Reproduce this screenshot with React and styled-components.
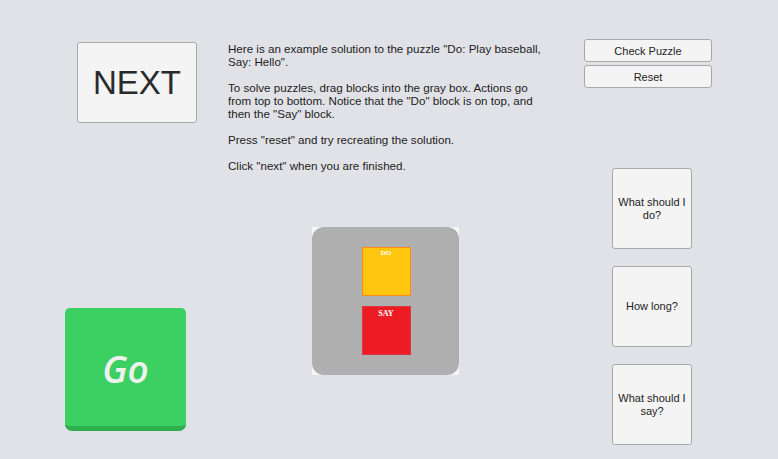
import React from 'react'
import styled, { createGlobalStyle } from 'styled-components'

const GlobalStyle = createGlobalStyle`
  html, body {
    margin: 0;
    padding: 0;
    background: #e1e2e7;
  }
  body {
    font-family: 'Liberation Sans', Arial, sans-serif;
  }
`

const Screen = styled.div`
  width: 778px;
  height: 459px;
  display: flex;
  background: #e1e2e7;
  overflow: hidden;
`

const LeftColumn = styled.div`
  width: 228px;
  display: flex;
  flex-direction: column;
  align-items: flex-start;
  padding: 42px 0 28px 0;
  box-sizing: border-box;
`

const MiddleColumn = styled.div`
  width: 356px;
  display: flex;
  flex-direction: column;
  align-items: flex-start;
  padding-top: 42px;
  box-sizing: border-box;
`

const RightColumn = styled.div`
  flex: 1;
  display: flex;
  flex-direction: column;
  align-items: flex-start;
  padding-top: 39px;
  box-sizing: border-box;
`

const UiButton = styled.div`
  box-sizing: border-box;
  background: #f4f4f4;
  border: 1px solid #a8a8a8;
  border-radius: 3px;
  color: #232323;
  display: flex;
  align-items: center;
  justify-content: center;
  text-align: center;
`

const NextButton = styled(UiButton)`
  margin-left: 77px;
  width: 120px;
  height: 81px;
  font-size: 33px;
  color: #2a2a2a;
`

const GoButton = styled.div`
  margin-top: auto;
  margin-left: 65px;
  width: 121px;
  height: 123px;
  box-sizing: border-box;
  background: #3ccf61;
  border-radius: 5px 5px 7px 7px;
  border-bottom: 5px solid #2fae4d;
  display: flex;
  align-items: center;
  justify-content: center;
  font-family: 'Open Sans', sans-serif;
  font-style: italic;
  font-weight: 600;
  font-size: 37px;
  color: #eef1ee;
  padding-top: 2px;
`

const Instructions = styled.div`
  width: 330px;
  font-size: 11.6px;
  line-height: 13px;
  color: #1c1c1c;
`

const Para = styled.p`
  margin: 0 0 13px 0;
`

const PuzzleFrame = styled.div`
  margin: 42px 0 0 84px;
  width: 147px;
  height: 148px;
  background: #f6f6f6;
`

const PuzzleBox = styled.div`
  width: 100%;
  height: 100%;
  background: #afafaf;
  border-radius: 12px;
  display: flex;
  flex-direction: column;
  align-items: center;
  gap: 10px;
  padding: 20px 0 0 1px;
  box-sizing: border-box;
`

const Block = styled.div`
  width: 49px;
  height: 49px;
  box-sizing: border-box;
  background: ${p => p.$fill};
  border: 1px solid ${p => p.$edge};
  color: #fff;
  font-family: 'Liberation Serif', 'Times New Roman', serif;
  font-weight: 700;
  font-size: ${p => p.$size}px;
  text-align: center;
  padding-top: ${p => p.$pad}px;
`

const SmallButton = styled(UiButton)`
  width: 128px;
  height: 23px;
  font-size: 11px;
  margin-bottom: 3px;
`

const QuestionButton = styled(UiButton)`
  margin-left: 28px;
  width: 80px;
  height: 81px;
  font-size: 11px;
  line-height: 13px;
  padding: 0 4px;
  margin-top: ${p => p.$top}px;
`

export default function App() {
  return (
    <>
      <GlobalStyle />
      <Screen>
        <LeftColumn>
          <NextButton>NEXT</NextButton>
          <GoButton>Go</GoButton>
        </LeftColumn>
        <MiddleColumn>
          <Instructions>
            <Para>
              Here is an example solution to the puzzle "Do: Play baseball,
              <br />
              Say: Hello".
            </Para>
            <Para>
              To solve puzzles, drag blocks into the gray box. Actions go
              <br />
              from top to bottom. Notice that the "Do" block is on top, and
              <br />
              then the "Say" block.
            </Para>
            <Para>Press "reset" and try recreating the solution.</Para>
            <Para>Click "next" when you are finished.</Para>
          </Instructions>
          <PuzzleFrame>
            <PuzzleBox>
              <Block $fill="#ffc60f" $edge="#ff8a1c" $size={7} $pad={1}>
                DO
              </Block>
              <Block $fill="#ed1c24" $edge="#d9383e" $size={8} $pad={2}>
                SAY
              </Block>
            </PuzzleBox>
          </PuzzleFrame>
        </MiddleColumn>
        <RightColumn>
          <SmallButton>Check Puzzle</SmallButton>
          <SmallButton>Reset</SmallButton>
          <QuestionButton $top={77}>What should I do?</QuestionButton>
          <QuestionButton $top={17}>How long?</QuestionButton>
          <QuestionButton $top={17}>What should I say?</QuestionButton>
        </RightColumn>
      </Screen>
    </>
  )
}
